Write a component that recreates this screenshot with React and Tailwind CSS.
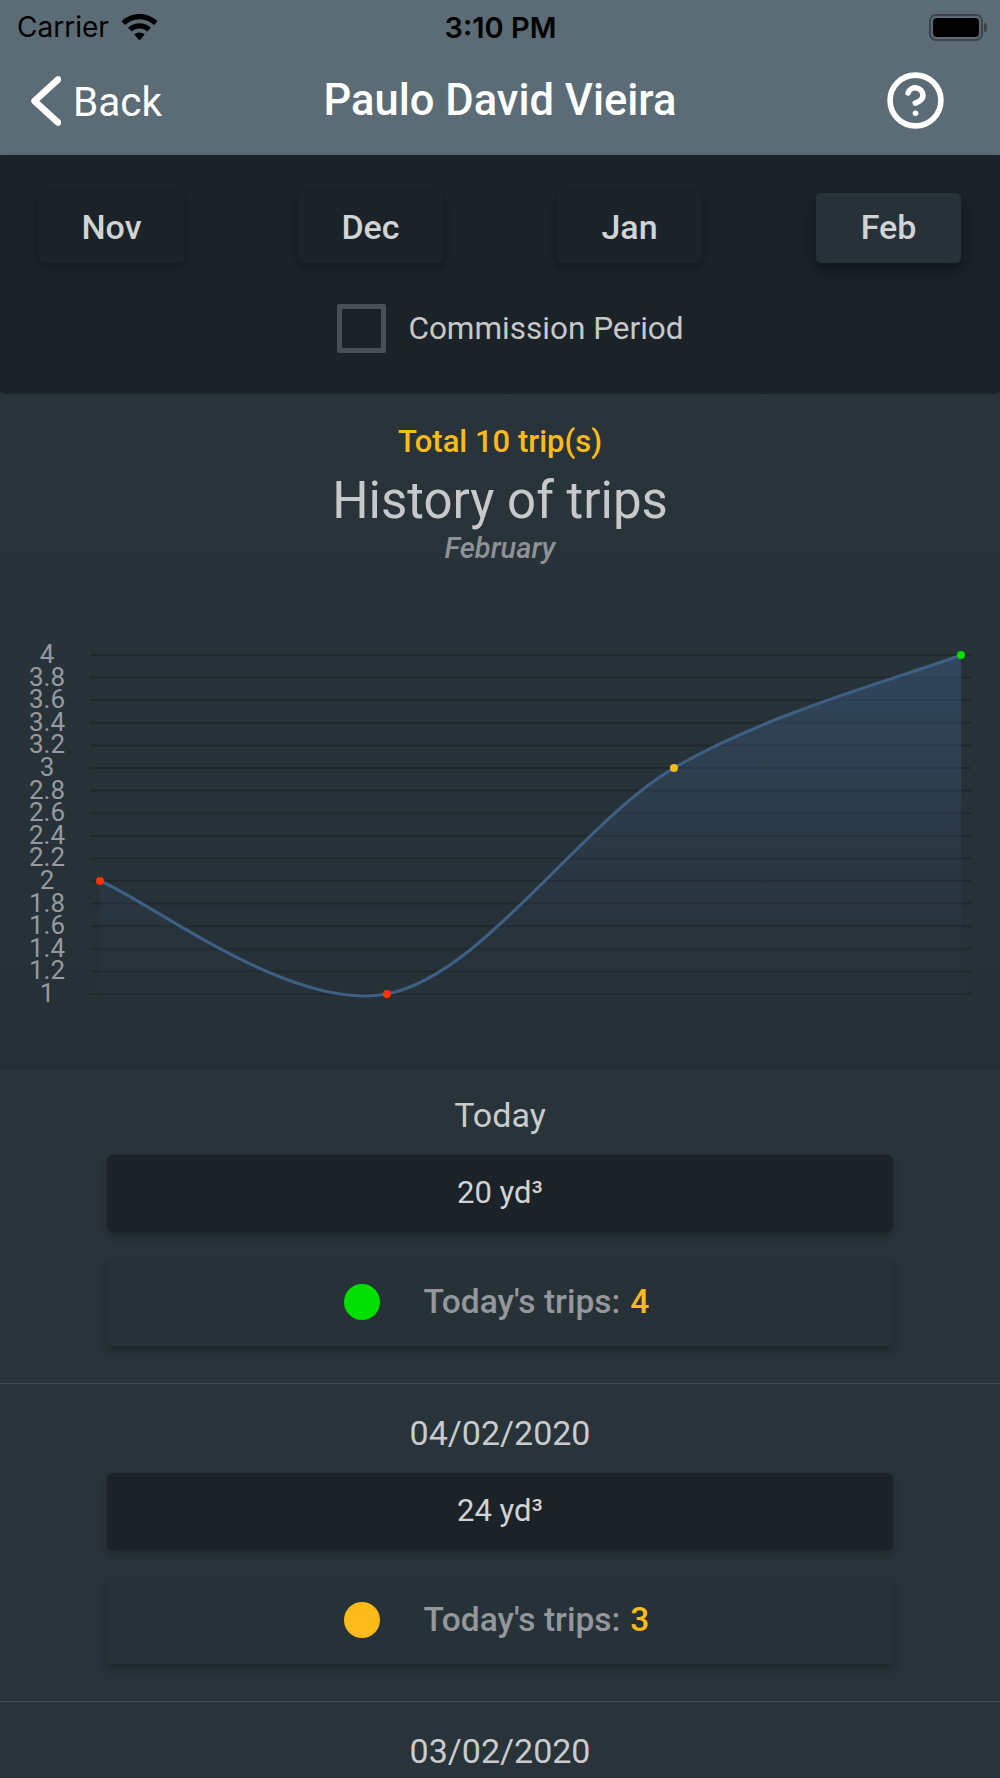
import { CircleHelp } from 'lucide-react';

const months = ['Nov', 'Dec', 'Jan', 'Feb'];
const ticks = ['4', '3.8', '3.6', '3.4', '3.2', '3', '2.8', '2.6', '2.4', '2.2', '2', '1.8', '1.6', '1.4', '1.2', '1'];
const points = [
  { x: 100, y: 226, color: '#ff3300' },
  { x: 387, y: 339, color: '#ff3300' },
  { x: 674, y: 113, color: '#fdbb1a' },
  { x: 961, y: 0, color: '#00e000' },
];

// cardinal spline through the data points
function curvePath() {
  let d = `M${points[0].x} ${points[0].y}`;
  for (let i = 0; i < points.length - 1; i++) {
    const p0 = points[i - 1] || points[i];
    const p1 = points[i];
    const p2 = points[i + 1];
    const p3 = points[i + 2] || p2;
    const c1x = p1.x + (p2.x - p0.x) / 6;
    const c1y = p1.y + (p2.y - p0.y) / 6;
    const c2x = p2.x - (p3.x - p1.x) / 6;
    const c2y = p2.y - (p3.y - p1.y) / 6;
    d += ` C${c1x} ${c1y} ${c2x} ${c2y} ${p2.x} ${p2.y}`;
  }
  return d;
}

function StatusBar() {
  return (
    <div className="flex h-[52px] items-center justify-between pl-[17px] pr-[13px] pt-[2px] text-black font-['Inter',sans-serif]">
      <div className="flex w-[200px] items-center gap-[12px] text-[28px] leading-none">
        <span>Carrier</span>
        <svg width="37" height="27" viewBox="0 0 37 27" fill="black">
          <path d="M18.5 0C11.5 0 5.2 2.7 0.5 7.2L4 11C7.8 7.4 12.9 5.2 18.5 5.2S29.2 7.4 33 11L36.5 7.2C31.8 2.7 25.5 0 18.5 0Z" />
          <path d="M18.5 9.3C14.1 9.3 10.1 11 7.1 13.8L10.6 17.5C12.7 15.6 15.5 14.4 18.5 14.4S24.3 15.6 26.4 17.5L29.9 13.8C26.9 11 22.9 9.3 18.5 9.3Z" />
          <path d="M18.5 18.6C16.5 18.6 14.7 19.4 13.3 20.6L18.5 26.5L23.7 20.6C22.3 19.4 20.5 18.6 18.5 18.6Z" />
        </svg>
      </div>
      <span className="pr-[3px] text-[29px] font-semibold leading-none">3:10 PM</span>
      <div className="flex w-[200px] items-center justify-end gap-[1px]">
        <div className="h-[27px] w-[54px] rounded-[7px] border-2 border-[#3c454b] p-[2px]">
          <div className="h-full w-full rounded-[4px] bg-black" />
        </div>
        <div className="h-[9px] w-[3px] rounded-r-full bg-[#3c454b]" />
      </div>
    </div>
  );
}

function NavBar() {
  return (
    <div className="grid h-[103px] grid-cols-[1fr_auto_1fr] items-center pb-[6px] pl-[31px] pr-[54px] text-white">
      <div className="flex items-center gap-[12px]">
        <svg width="30" height="50" viewBox="0 0 30 50" fill="none" stroke="white" strokeWidth="6.5" strokeLinecap="round" strokeLinejoin="round">
          <path d="M27 3.5L3.5 25L27 46.5" />
        </svg>
        <span className="pt-[3px] text-[40.5px] leading-none">Back</span>
      </div>
      <h1 className="pl-[23px] text-[43.5px] font-medium leading-[48px]">Paulo David Vieira</h1>
      <div className="flex justify-end">
        <CircleHelp size={61} strokeWidth={2.2} color="white" />
      </div>
    </div>
  );
}

function PeriodPanel() {
  return (
    <div className="relative h-[239px] rounded-b-[6px] bg-[#1b2228] px-[39px] pt-[38px] shadow-[0_2px_6px_rgba(0,0,0,0.25)]">
      <div className="flex justify-between">
        {months.map((month) => (
          <div
            key={month}
            className={`flex h-[70px] w-[145px] items-center justify-center rounded-[5px] pb-[2px] text-[34px] font-medium ${
              month === 'Feb' ? 'bg-[#273138] shadow-[0_7px_16px_rgba(0,0,0,0.4)]' : 'bg-[#1b2228] shadow-[0_3px_8px_rgba(0,0,0,0.3)]'
            } text-[#d2d3d5]`}
          >
            {month}
          </div>
        ))}
      </div>
      <div className="mt-[41px] flex items-center justify-center gap-[22px] pl-[21px]">
        <div className="h-[49px] w-[49px] rounded-[2px] border-[5px] border-[#494f53]" />
        <span className="text-[31.5px] text-[#c6c8ca]">Commission Period</span>
      </div>
    </div>
  );
}

function TripsChart() {
  const line = curvePath();
  return (
    <svg width="1000" height="415" viewBox="0 -20 1000 415" className="block">
      <defs>
        <linearGradient id="area" x1="0" y1="0" x2="0" y2="1">
          <stop offset="0" stopColor="#3f648f" stopOpacity="0.42" />
          <stop offset="0.55" stopColor="#3f648f" stopOpacity="0.12" />
          <stop offset="0.9" stopColor="#3f648f" stopOpacity="0" />
        </linearGradient>
      </defs>
      {ticks.map((tick, i) => (
        <g key={tick}>
          <line x1="90" x2="971" y1={i * 22.6} y2={i * 22.6} stroke="#20282e" strokeWidth="2" />
          <text x="47" y={i * 22.6 + 8} textAnchor="middle" fontSize="26" fill="#969a9e" fontFamily="Roboto, sans-serif">
            {tick}
          </text>
        </g>
      ))}
      <path d={`${line} L961 390 L100 390 Z`} fill="url(#area)" />
      <path d={line} fill="none" stroke="#3f6085" strokeWidth="3" />
      {points.map((p) => (
        <circle key={p.x} cx={p.x} cy={p.y} r="4" fill={p.color} />
      ))}
    </svg>
  );
}

function DayLabel({ children }) {
  return <div className="flex h-[89px] items-start justify-center pt-[29px] text-[34px] leading-[40px] text-[#c9cbcd]">{children}</div>;
}

function DayEntry({ date, volume, trips, dotColor }) {
  return (
    <div className="border-b border-[#444d53] pb-[37px]">
      <DayLabel>{date}</DayLabel>
      <div className="mx-[107px] flex h-[77px] items-center justify-center rounded-[5px] bg-[#1b2228] text-[31px] text-[#d2d3d5] shadow-[0_4px_8px_rgba(0,0,0,0.25)]">
        {volume}
      </div>
      <div className="mx-[107px] mt-[30px] flex h-[84px] items-center justify-center rounded-[5px] bg-[#273138] pb-[4px] pr-[7px] shadow-[0_4px_10px_rgba(0,0,0,0.3)]">
        <div className="mr-[44px] h-[36px] w-[36px] rounded-full" style={{ backgroundColor: dotColor }} />
        <span className="text-[33.5px] font-medium text-[#94989c]">Today's trips:</span>
        <span className="ml-[10px] text-[33.5px] font-medium text-[#fdbb1a]">{trips}</span>
      </div>
    </div>
  );
}

export default function App() {
  return (
    <div className="h-[1778px] w-[1000px] overflow-hidden bg-[#28333a] font-['Roboto',sans-serif]">
      <div className="bg-[#5b6c76]">
        <StatusBar />
        <NavBar />
      </div>
      <PeriodPanel />
      <div className="relative h-[672px] bg-gradient-to-b from-[#29333a] to-[#263037] pt-[28px] shadow-[0_2px_5px_rgba(0,0,0,0.18)]">
        <p className="text-center text-[31px] font-medium leading-[40px] text-[#fdbb1a]">Total 10 trip(s)</p>
        <h2 className="mt-[9px] text-center text-[51px] leading-[60px] text-[#c6c8ca]">History of trips</h2>
        <p className="text-center text-[29px] font-medium italic leading-[34px] text-[#8e9296]">February</p>
        <div className="mt-[70px]">
          <TripsChart />
        </div>
      </div>
      <DayEntry date="Today" volume="20 yd³" trips="4" dotColor="#00e000" />
      <DayEntry date="04/02/2020" volume="24 yd³" trips="3" dotColor="#fdbb1a" />
      <DayLabel>03/02/2020</DayLabel>
    </div>
  );
}
